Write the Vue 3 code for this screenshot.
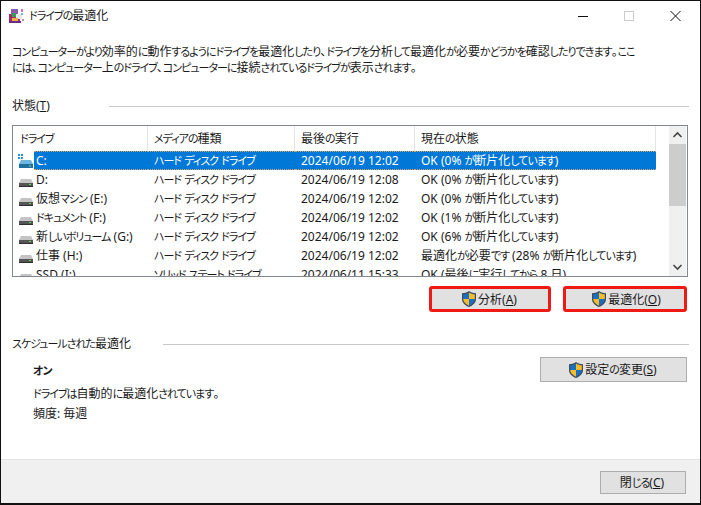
<script setup>
import { h } from 'vue'

const drives = [
  { name: 'C:', media: 'ハード ディスク ドライブ', last: '2024/06/19 12:02', state: 'OK (0% が断片化しています)', selected: true },
  { name: 'D:', media: 'ハード ディスク ドライブ', last: '2024/06/19 12:08', state: 'OK (0% が断片化しています)' },
  { name: '仮想マシン (E:)', media: 'ハード ディスク ドライブ', last: '2024/06/19 12:02', state: 'OK (0% が断片化しています)' },
  { name: 'ドキュメント (F:)', media: 'ハード ディスク ドライブ', last: '2024/06/19 12:02', state: 'OK (1% が断片化しています)' },
  { name: '新しいボリューム (G:)', media: 'ハード ディスク ドライブ', last: '2024/06/19 12:02', state: 'OK (6% が断片化しています)' },
  { name: '仕事 (H:)', media: 'ハード ディスク ドライブ', last: '2024/06/19 12:02', state: '最適化が必要です (28% が断片化しています)' },
  { name: 'SSD (I:)', media: 'ソリッド ステート ドライブ', last: '2024/06/11 15:33', state: 'OK (最後に実行してから 8 日)' }
]

// kana runs are set tighter than kanji, like the system UI font
const Jp = ({ text }) =>
  text.split(/([\u3040-\u30ff]+)/).map((s, i) => (i % 2 ? h('span', { class: 'kana' }, s) : s))
Jp.props = ['text']
</script>

<template>
  <div class="window">
    <div class="titlebar">
      <svg class="app-icon" width="16" height="16" viewBox="0 0 16 16">
        <rect x="0" y="6" width="11" height="9" fill="#a82a62" />
        <rect x="0" y="13" width="12" height="2" fill="#6d2a86" />
        <rect x="2" y="1" width="7" height="6" fill="#8a5ab0" />
        <rect x="3" y="5" width="4" height="4" fill="#3c9a58" />
        <rect x="7" y="6" width="6" height="5" fill="#e6e6ee" />
        <rect x="3" y="10" width="6" height="3" fill="#e9b04a" />
        <rect x="12" y="1" width="2" height="3" fill="#d070c0" />
        <rect x="12" y="5" width="2" height="2" fill="#70b8e0" />
        <rect x="13" y="11" width="2" height="2" fill="#a0a0a8" />
      </svg>
      <span class="title"><Jp text="ドライブの最適化" /></span>
      <div class="controls">
        <svg width="46" height="20" viewBox="0 0 46 20"><path d="M0 10.5H10" stroke="#111" fill="none" /></svg>
        <svg width="46" height="20" viewBox="0 0 46 20"><rect x="0.5" y="5.5" width="9" height="9" stroke="#ccc" fill="none" /></svg>
        <svg width="11" height="20" viewBox="0 0 11 20"><path d="M0.5 5L10.5 15M10.5 5L0.5 15" stroke="#111" fill="none" /></svg>
      </div>
    </div>

    <div class="content">
      <div class="intro">
        <div><Jp text="コンピューターがより効率的に動作するようにドライブを最適化したり、ドライブを分析して最適化が必要かどうかを確認したりできます。ここ" /></div>
        <div><Jp text="には、コンピューター上のドライブ、コンピューターに接続されているドライブが表示されます。" /></div>
      </div>

      <div class="section-head status-head">
        <span>状態(<u>T</u>)</span>
        <i class="rule"></i>
      </div>

      <div class="listbox">
        <div class="list-main">
          <div class="row header">
            <div class="cell first"><Jp text="ドライブ" /></div>
            <div class="cell"><Jp text="メディアの種類" /></div>
            <div class="cell"><Jp text="最後の実行" /></div>
            <div class="cell"><Jp text="現在の状態" /></div>
          </div>
          <div v-for="d in drives" :key="d.name" class="row" :class="{ selected: d.selected }">
            <div class="cell name-cell">
              <svg class="drive-icon" width="16" height="16" viewBox="0 0 16 16">
                <template v-if="d.selected">
                  <path d="M0 1h2v2H0zM3 1h2v2H3zM0 4h2v2H0zM3 4h2v2H3z" fill="#2a8fd8" />
                  <path d="M3 7h10l2 4v1H1v-1z" fill="#6fb6dc" />
                  <rect x="1" y="11" width="14" height="4" fill="#1f6f9e" />
                  <rect x="11" y="12.5" width="2" height="1" fill="#8fe08f" />
                </template>
                <template v-else>
                  <path d="M3 7h10l2 4v1H1v-1z" fill="#c4c4c4" />
                  <rect x="1" y="11" width="14" height="4" fill="#555" />
                  <rect x="1" y="14" width="14" height="1" fill="#2e2e2e" />
                  <rect x="11" y="12" width="2" height="1" fill="#52d452" />
                </template>
              </svg>
              <span class="name"><Jp :text="d.name" /></span>
            </div>
            <div class="cell"><Jp :text="d.media" /></div>
            <div class="cell">{{ d.last }}</div>
            <div class="cell"><Jp :text="d.state" /></div>
          </div>
        </div>
        <div class="scrollbar">
          <svg class="arrow" width="17" height="18" viewBox="0 0 17 18"><path d="M4.5 11L8.5 7L12.5 11" stroke="#444" stroke-width="1.6" fill="none" /></svg>
          <div class="track"><div class="thumb"></div></div>
          <svg class="arrow" width="17" height="18" viewBox="0 0 17 18"><path d="M4.5 7L8.5 11L12.5 7" stroke="#444" stroke-width="1.6" fill="none" /></svg>
        </div>
      </div>

      <div class="actions">
        <button class="btn marked analyze">
          <svg class="shield" width="16" height="16" viewBox="0 0 16 16"><use href="#uac" /></svg>分析(<u>A</u>)
        </button>
        <button class="btn marked optimize">
          <svg class="shield" width="16" height="16" viewBox="0 0 16 16"><use href="#uac" /></svg>最適化(<u>O</u>)
        </button>
      </div>

      <div class="section-head schedule-head">
        <span><Jp text="スケジュールされた最適化" /></span>
        <i class="rule"></i>
      </div>

      <div class="schedule">
        <div class="schedule-text">
          <div class="on"><Jp text="オン" /></div>
          <div class="line-auto"><Jp text="ドライブは自動的に最適化されています。" /></div>
          <div class="line-freq">頻度: 毎週</div>
        </div>
        <button class="btn settings">
          <svg class="shield" width="16" height="16" viewBox="0 0 16 16"><use href="#uac" /></svg><Jp text="設定の変更" />(<u>S</u>)
        </button>
      </div>
    </div>

    <div class="footer">
      <button class="btn close"><Jp text="閉じる" />(<u>C</u>)</button>
    </div>

    <svg width="0" height="0" class="defs">
      <symbol id="uac" viewBox="0 0 16 16">
        <path d="M8 0C10 1.6 12.8 2.2 15 2.2V8C15 11.8 11.8 14.6 8 16C4.2 14.6 1 11.8 1 8V2.2C3.2 2.2 6 1.6 8 0Z" fill="#3f4d5c" />
        <path d="M8 1.5V8H2.2V3.3C4.3 3.2 6.3 2.7 8 1.5Z" fill="#1a6fc4" />
        <path d="M8 1.5C9.7 2.7 11.7 3.2 13.8 3.3V8H8Z" fill="#f5bd2c" />
        <path d="M2.2 8H8V14.7C5 13.5 2.4 11.2 2.2 8Z" fill="#f5bd2c" />
        <path d="M8 8H13.8C13.6 11.2 11 13.5 8 14.7Z" fill="#1a6fc4" />
      </symbol>
    </svg>
  </div>
</template>

<style scoped>
.window {
  width: 701px;
  height: 505px;
  box-sizing: border-box;
  display: flex;
  flex-direction: column;
  background: #fff;
  border: 1px solid #111;
  border-bottom-width: 2px;
  color: #1a1a1a;
  font: 12px/17px "Noto Sans", "Noto Sans CJK JP", sans-serif;
  font-feature-settings: "palt";
  overflow: hidden;
}
.titlebar {
  height: 29px;
  flex: none;
  display: flex;
  align-items: center;
  padding-left: 8px;
}
.title {
  margin-left: 4px;
}
.controls {
  margin-left: auto;
  margin-right: 19px;
  display: flex;
}
.content {
  flex: 1;
  padding: 0 12px 0 11px;
}
.intro {
  margin-top: 14px;
  line-height: 16px;
  white-space: nowrap;
}
.section-head {
  display: flex;
  align-items: center;
}
.rule {
  flex: 1;
  height: 1px;
  background: #c8c8c8;
  margin: 2px -1px 0 0;
}
.status-head {
  margin-top: 21px;
  gap: 59px;
}
.listbox {
  margin-top: 11px;
  height: 152px;
  box-sizing: border-box;
  border: 1px solid #828790;
  display: flex;
  overflow: hidden;
}
.list-main {
  width: 643px;
  flex: none;
  height: 100%;
  overflow: hidden;
}
.row {
  display: grid;
  grid-template-columns: 135px 147px 120px 241px;
  height: 19px;
  align-items: center;
  white-space: nowrap;
}
.row.header {
  height: 25px;
}
.header .cell {
  height: 25px;
  line-height: 25px;
  border-right: 1px solid #e5e5e5;
}
.header .first {
  padding-left: 7px;
}
.cell {
  box-sizing: border-box;
  padding-left: 6px;
  height: 19px;
  line-height: 19px;
}
.name-cell {
  display: flex;
  align-items: center;
  padding-left: 5px;
}
.drive-icon {
  flex: none;
}
.name {
  padding-left: 2px;
  height: 19px;
}
.selected .cell:not(.name-cell),
.selected .name {
  background: #0078d7;
  color: #fff;
  box-sizing: border-box;
  border-top: 1px dotted #d9a468;
  border-bottom: 1px dotted #d9a468;
  line-height: 17px;
}
.selected .name {
  flex: 1;
}
.scrollbar {
  width: 17px;
  margin-left: 13px;
  flex: none;
  display: flex;
  flex-direction: column;
  background: #f0f0f0;
}
.arrow {
  flex: none;
}
.track {
  flex: 1;
}
.thumb {
  height: 62px;
  background: #cdcdcd;
}
.actions {
  display: flex;
  justify-content: flex-end;
  gap: 12px;
  margin-top: 9px;
  padding-right: 1px;
}
.btn {
  box-sizing: border-box;
  display: flex;
  align-items: center;
  justify-content: center;
  background: #e1e1e1;
  border: 1px solid #adadad;
  padding: 0;
  font: inherit;
  font-feature-settings: inherit;
  color: #1a1a1a;
}
.shield {
  margin-right: 1px;
}
.marked {
  height: 26px;
  border: 3px solid #f01a14;
  border-radius: 3px;
}
.analyze {
  width: 122px;
  padding-right: 2px;
}
.optimize {
  width: 124px;
  padding-left: 2px;
}
.schedule-head {
  margin-top: 23px;
  gap: 32px;
}
.schedule {
  display: flex;
  justify-content: space-between;
  align-items: flex-start;
  padding-right: 1px;
  margin-top: 5px;
}
.schedule-text {
  padding: 5px 0 0 21px;
}
.on {
  font-weight: 700;
}
.line-auto {
  margin-top: 6px;
}
.line-freq {
  margin-top: 3px;
}
.settings {
  width: 147px;
  height: 25px;
  padding-right: 2px;
}
.footer {
  height: 44px;
  flex: none;
  box-sizing: border-box;
  background: #f0f0f0;
  border-top: 1px solid #e3e3e3;
  display: flex;
  justify-content: flex-end;
  align-items: flex-start;
  padding: 11px 14px 0 0;
}
.close {
  width: 86px;
  height: 23px;
  padding-right: 2px;
}
.defs {
  position: absolute;
}
u {
  text-underline-offset: 1px;
}
</style>

<style>
.kana {
  font-size: 11px;
  letter-spacing: -1px;
}
</style>
